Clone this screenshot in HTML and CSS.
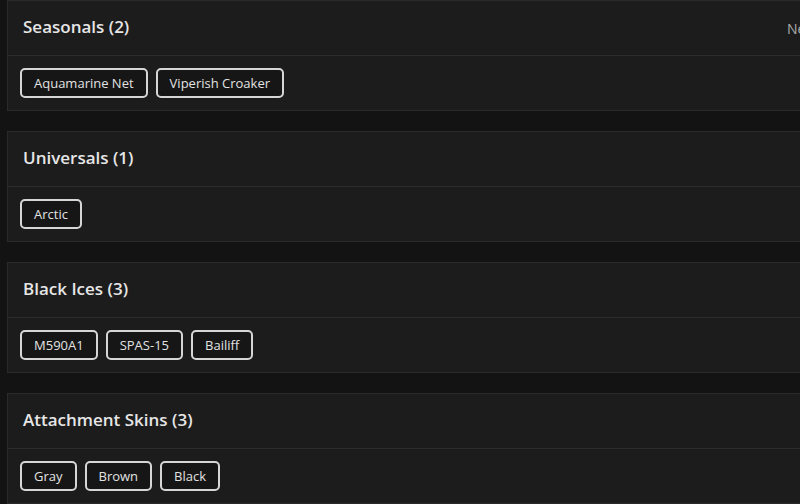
FILE: index.html
```html
<!DOCTYPE html>
<html>
<head>
<meta charset="utf-8">
<link rel="stylesheet" href="styles.css">
</head>
<body>
<div class="page">
  <section class="card">
    <header class="card-head">
      <h2 class="card-title">Seasonals (2)</h2>
      <span class="card-meta">New</span>
    </header>
    <div class="card-body">
      <span class="tag">Aquamarine Net</span>
      <span class="tag">Viperish Croaker</span>
    </div>
  </section>
  <section class="card">
    <header class="card-head">
      <h2 class="card-title">Universals (1)</h2>
    </header>
    <div class="card-body">
      <span class="tag">Arctic</span>
    </div>
  </section>
  <section class="card">
    <header class="card-head">
      <h2 class="card-title">Black Ices (3)</h2>
    </header>
    <div class="card-body">
      <span class="tag">M590A1</span>
      <span class="tag">SPAS-15</span>
      <span class="tag">Bailiff</span>
    </div>
  </section>
  <section class="card">
    <header class="card-head">
      <h2 class="card-title">Attachment Skins (3)</h2>
    </header>
    <div class="card-body">
      <span class="tag">Gray</span>
      <span class="tag">Brown</span>
      <span class="tag">Black</span>
    </div>
  </section>
</div>
</body>
</html>
```
FILE: styles.css
```css
* { box-sizing: border-box; }
html, body {
  margin: 0;
  padding: 0;
  background: #131313;
  overflow: hidden;
  height: 504px;
}
body {
  font-family: "Open Sans", "Noto Sans", sans-serif;
  color: #e4e4e4;
}
.page {
  padding: 0 0 0 7px;
  width: 860px;
  display: flex;
  flex-direction: column;
  gap: 20px;
}
.card {
  background: #1c1c1c;
  border: 1px solid #2a2a2a;
}
.card-head {
  height: 55px;
  border-bottom: 1px solid #2c2c2c;
  display: flex;
  align-items: center;
  padding: 0 15px 3px;
}
.card-title {
  margin: 0;
  font-size: 17px;
  font-weight: 600;
  color: #e6e6e6;
  flex: 1;
}
.card-meta {
  font-size: 14px;
  color: #ababab;
  width: 57px;
  margin-top: 4px;
}
.card-body {
  height: 54px;
  padding: 12px 12px;
  display: flex;
  gap: 8px;
}
.tag {
  height: 30px;
  display: flex;
  align-items: center;
  padding: 0 12px;
  border: 2px solid #d6d6d6;
  border-radius: 5px;
  background: #161616;
  font-size: 13px;
  color: #e2e2e2;
}
```
